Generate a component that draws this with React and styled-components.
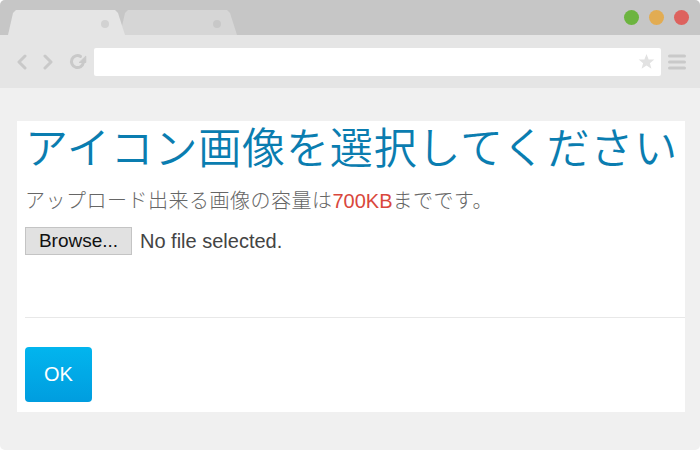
import styled, { createGlobalStyle } from "styled-components";

const Global = createGlobalStyle`
  html, body { margin: 0; padding: 0; background: #ffffff; }
  body { font-family: "Liberation Sans", "Noto Sans CJK JP", sans-serif; }
`;

const Window = styled.div`
  width: 700px;
  height: 450px;
  border-radius: 5px;
  overflow: hidden;
  background: #f0f0f0;
  display: flex;
  flex-direction: column;
`;

const TitleBar = styled.div`
  height: 35px;
  background: #c6c6c6;
  display: flex;
  align-items: flex-end;
  padding: 0 11px 0 8px;
`;

const Tabs = styled.div`
  display: flex;
  flex: 1;
`;

const Tab = styled.div`
  position: relative;
  width: 117px;
  height: 25px;
  margin-right: -5px;
  background: ${(p) => (p.$active ? "#e5e5e5" : "#d6d6d6")};
  z-index: ${(p) => (p.$active ? 2 : 1)};
  clip-path: polygon(0 100%, 5px 3px, 8px 0, calc(100% - 10px) 0, calc(100% - 7px) 3px, 100% 100%);
`;

const TabDot = styled.span`
  position: absolute;
  right: 16px;
  top: 10px;
  width: 8px;
  height: 8px;
  border-radius: 50%;
  background: ${(p) => (p.$active ? "#d2d2d2" : "#c8c8c8")};
`;

const Lights = styled.div`
  display: flex;
  gap: 10px;
  align-self: center;
`;

const Light = styled.span`
  width: 15px;
  height: 15px;
  border-radius: 50%;
  background: ${(p) => p.$color};
`;

const Toolbar = styled.div`
  height: 53px;
  background: #e5e5e5;
  display: flex;
  align-items: center;
  padding: 0 14px 0 16px;
`;

const NavButton = styled.span`
  display: flex;
  width: ${(p) => p.$w || 26}px;
`;

const AddressBar = styled.div`
  flex: 1;
  height: 28px;
  margin: 0 7px 0 1px;
  background: #ffffff;
  border-radius: 2px;
  display: flex;
  align-items: center;
  justify-content: flex-end;
  padding-right: 6px;
`;

const Content = styled.div`
  flex: 1;
  padding: 33px 15px 38px 17px;
  display: flex;
`;

const Panel = styled.div`
  flex: 1;
  background: #ffffff;
  padding: 0 0 0 8px;
  display: flex;
  flex-direction: column;
  align-items: flex-start;
`;

const Title = styled.h1`
  margin: 0;
  font-family: "Noto Sans CJK JP", sans-serif;
  font-weight: 350;
  font-size: 43px;
  line-height: 49px;
  color: #0a7db0;
  letter-spacing: 0.85px;
  white-space: nowrap;
`;

const Note = styled.p`
  margin: 16px 0 0;
  font-family: "Noto Sans CJK JP", sans-serif;
  font-weight: 300;
  font-size: 20px;
  line-height: 28px;
  color: #666666;
  letter-spacing: 0.5px;
`;

const Size = styled.span`
  font-family: "Liberation Sans", sans-serif;
  font-weight: 400;
  letter-spacing: 0;
  color: #d9473c;
`;

const FileRow = styled.div`
  display: flex;
  align-items: center;
  margin-top: 12px;
`;

const BrowseButton = styled.button`
  width: 107px;
  height: 28px;
  padding: 0;
  background: #e1e1e1;
  border: 1px solid #c4c4c4;
  border-radius: 0;
  font-family: "Liberation Sans", sans-serif;
  font-size: 19px;
  color: #111111;
`;

const FileName = styled.span`
  margin-left: 8px;
  font-family: "Liberation Sans", sans-serif;
  font-size: 20px;
  color: #444444;
`;

const Divider = styled.hr`
  align-self: stretch;
  margin: 62px 0 0;
  border: 0;
  border-top: 1px solid #e8e8e8;
`;

const OkButton = styled.button`
  margin-top: 29px;
  width: 67px;
  height: 55px;
  border: 0;
  border-radius: 4px;
  background: linear-gradient(#02b5ee, #009ddf);
  color: #ffffff;
  font-family: "Liberation Sans", sans-serif;
  font-size: 20px;
  padding: 0;
`;

const Icon = ({ children, w = 16, h = 16 }) => (
  <svg width={w} height={h} viewBox={`0 0 ${w} ${h}`} fill="none" stroke="#c9c9c9" strokeWidth="3" strokeLinecap="round" strokeLinejoin="round">
    {children}
  </svg>
);

export default function App() {
  return (
    <>
      <Global />
      <Window>
        <TitleBar>
          <Tabs>
            <Tab $active>
              <TabDot $active />
            </Tab>
            <Tab>
              <TabDot />
            </Tab>
          </Tabs>
          <Lights>
            <Light $color="#6cb43f" />
            <Light $color="#e2ac52" />
            <Light $color="#dd625e" />
          </Lights>
        </TitleBar>
        <Toolbar>
          <NavButton>
            <Icon w={12} h={16}>
              <path d="M9 2 L3 8 L9 14" />
            </Icon>
          </NavButton>
          <NavButton>
            <Icon w={12} h={16}>
              <path d="M3 2 L9 8 L3 14" />
            </Icon>
          </NavButton>
          <NavButton $w={25}>
            <Icon w={19} h={19}>
              <path d="M12.5 4.4 A6 6 0 1 0 15.4 10.6" />
              <path d="M11.5 10.5 L17.8 10.5 L17.8 4.5 Z" fill="#c9c9c9" strokeWidth="1" />
            </Icon>
          </NavButton>
          <AddressBar>
            <svg width="17" height="17" viewBox="0 0 24 24">
              <path d="M12 1.5 L15 9 L23 9.3 L16.8 14.3 L19 22.3 L12 17.7 L5 22.3 L7.2 14.3 L1 9.3 L9 9 Z" fill="#e2e2e2" />
            </svg>
          </AddressBar>
          <svg width="18" height="16" viewBox="0 0 18 16">
            <g stroke="#c9c9c9" strokeWidth="3" strokeLinecap="round">
              <line x1="1.5" y1="2" x2="16.5" y2="2" />
              <line x1="1.5" y1="8" x2="16.5" y2="8" />
              <line x1="1.5" y1="14" x2="16.5" y2="14" />
            </g>
          </svg>
        </Toolbar>
        <Content>
          <Panel>
            <Title>アイコン画像を選択してください</Title>
            <Note>
              アップロード出来る画像の容量は<Size>700KB</Size>までです。
            </Note>
            <FileRow>
              <BrowseButton>Browse...</BrowseButton>
              <FileName>No file selected.</FileName>
            </FileRow>
            <Divider />
            <OkButton>OK</OkButton>
          </Panel>
        </Content>
      </Window>
    </>
  );
}
